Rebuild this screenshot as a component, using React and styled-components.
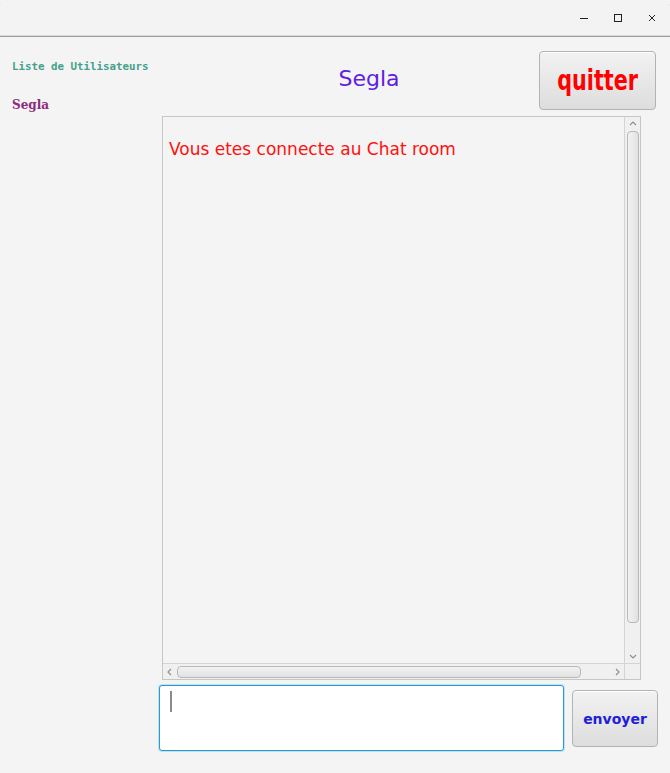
import React from 'react';
import styled, { createGlobalStyle } from 'styled-components';

const Global = createGlobalStyle`
    html, body {
        margin: 0;
        padding: 0;
        background: #f4f4f4;
    }
`;

const Window = styled.div`
    width: 670px;
    height: 773px;
    display: flex;
    flex-direction: column;
    background: #f4f4f4;
    font-family: "DejaVu Sans", sans-serif;
    overflow: hidden;
`;

const TitleBar = styled.div`
    height: 35px;
    display: flex;
    justify-content: flex-end;
    align-items: center;
    padding-right: 1px;
    background: #f3f3f3;
    border-top-left-radius: 6px;
    border-top-right-radius: 6px;
    border-bottom: 1px solid #dadada;
    box-shadow: 0 1px 0 #9c9c9c;
    margin-bottom: 1px;
`;

const WinButton = styled.div`
    width: 34px;
    height: 34px;
    display: flex;
    align-items: center;
    justify-content: center;
    color: #222;
`;

const Body = styled.div`
    flex: 1;
    display: grid;
    grid-template-columns: 159px 1fr;
`;

const Sidebar = styled.div`
    padding: 23px 0 0 12px;
    display: flex;
    flex-direction: column;
`;

const ListTitle = styled.div`
    font-family: "DejaVu Sans Mono", monospace;
    font-weight: bold;
    font-size: 10.8px;
    line-height: 14px;
    color: #46a08c;
    white-space: nowrap;
`;

const UserName = styled.div`
    margin-top: 24px;
    font-family: "DejaVu Serif", serif;
    font-weight: bold;
    font-size: 12px;
    line-height: 14px;
    color: #8c2c7c;
`;

const Main = styled.div`
    display: flex;
    flex-direction: column;
    padding-top: 14px;
`;

const Header = styled.div`
    height: 59px;
    display: flex;
    align-items: center;
    padding-right: 14px;
`;

const RoomTitle = styled.div`
    flex: 1;
    padding-left: 40px;
    text-align: center;
    font-size: 22px;
    color: #5e20e4;
    margin-top: -4px;
`;

const Button = styled.button`
    width: ${({ w }) => w}px;
    height: ${({ h }) => h}px;
    padding: 0;
    border: 1px solid #b3b3b3;
    border-radius: 4px;
    background: linear-gradient(#f2f2f2, #dddddd);
    box-shadow: inset 0 1px 0 #ffffff;
    color: ${({ color }) => color};
    font-weight: bold;
    display: flex;
    align-items: center;
    justify-content: center;
    cursor: pointer;
`;

const QuitLabel = styled.span`
    font-family: "DejaVu Sans", sans-serif;
    font-size: 28px;
    display: inline-block;
    transform: scaleX(0.74);
    margin-top: 0;
`;

const SendLabel = styled.span`
    font-family: "DejaVu Sans", sans-serif;
    font-size: 14px;
    margin-top: 2px;
`;

const ChatBox = styled.div`
    margin: 6px 29px 0 3px;
    height: 562px;
    border: 1px solid #c6c6c6;
    display: grid;
    grid-template-columns: 1fr 16px;
    grid-template-rows: 1fr 16px;
    background: #f4f4f4;
`;

const Messages = styled.div`
    padding: 21px 0 0 6px;
    font-size: 17px;
    line-height: 22px;
    color: #ff1010;
    white-space: nowrap;
    overflow: hidden;
`;

const VBar = styled.div`
    border-left: 1px solid #d4d4d4;
    background: #f0f0f0;
    display: flex;
    flex-direction: column;
    align-items: center;
`;

const HBar = styled.div`
    border-top: 1px solid #d4d4d4;
    background: #f0f0f0;
    display: flex;
    align-items: center;
`;

const Corner = styled.div`
    background: #f0f0f0;
    border-left: 1px solid #d4d4d4;
    border-top: 1px solid #d4d4d4;
`;

const Arrow = styled.div`
    width: 14px;
    height: 14px;
    flex: none;
    display: flex;
    align-items: center;
    justify-content: center;
`;

const VThumb = styled.div`
    width: 10px;
    height: 490px;
    border: 1px solid #b8b8b8;
    border-radius: 4px;
    background: linear-gradient(90deg, #f2f2f2, #e2e2e2);
`;

const HThumb = styled.div`
    width: 402px;
    height: 10px;
    border: 1px solid #b8b8b8;
    border-radius: 4px;
    background: linear-gradient(#f2f2f2, #e2e2e2);
`;

const Spacer = styled.div`
    flex: 1;
`;

const Footer = styled.div`
    margin: 5px 12px 0 0;
    display: flex;
    align-items: center;
    gap: 8px;
`;

const Input = styled.div`
    width: 405px;
    height: 66px;
    background: #ffffff;
    border: 1px solid #2a9bd0;
    border-radius: 3px;
    box-shadow: 0 0 0 1px #bfe2f3;
    padding: 5px 0 0 10px;
    box-sizing: border-box;
`;

const Caret = styled.div`
    width: 2px;
    height: 21px;
    background: #8a8a8a;
`;

const Chevron = ({ dir }) => {
    const paths = {
        up: 'M2 6 L5 3 L8 6',
        down: 'M2 4 L5 7 L8 4',
        left: 'M6 2 L3 5 L6 8',
        right: 'M4 2 L7 5 L4 8',
    };
    return (
        <svg width="10" height="10" viewBox="0 0 10 10">
            <path d={paths[dir]} fill="none" stroke="#8c8c8c" strokeWidth="1.1" />
        </svg>
    );
};

const App = () => (
    <Window>
        <Global />
        <TitleBar>
            <WinButton>
                <svg width="10" height="10" viewBox="0 0 10 10">
                    <path d="M1 5.5 H9" stroke="#222" strokeWidth="1" />
                </svg>
            </WinButton>
            <WinButton>
                <svg width="10" height="10" viewBox="0 0 10 10">
                    <rect x="1.5" y="1.5" width="7" height="7" fill="none" stroke="#222" strokeWidth="1" />
                </svg>
            </WinButton>
            <WinButton>
                <svg width="10" height="10" viewBox="0 0 10 10">
                    <path d="M2 2 L8 8 M8 2 L2 8" stroke="#222" strokeWidth="1" />
                </svg>
            </WinButton>
        </TitleBar>
        <Body>
            <Sidebar>
                <ListTitle>Liste de Utilisateurs</ListTitle>
                <UserName>Segla</UserName>
            </Sidebar>
            <Main>
                <Header>
                    <RoomTitle>Segla</RoomTitle>
                    <Button w={117} h={59} color="#ff0000">
                        <QuitLabel>quitter</QuitLabel>
                    </Button>
                </Header>
                <ChatBox>
                    <Messages>Vous etes connecte au Chat room</Messages>
                    <VBar>
                        <Arrow><Chevron dir="up" /></Arrow>
                        <VThumb />
                        <Spacer />
                        <Arrow><Chevron dir="down" /></Arrow>
                    </VBar>
                    <HBar>
                        <Arrow><Chevron dir="left" /></Arrow>
                        <HThumb />
                        <Spacer />
                        <Arrow><Chevron dir="right" /></Arrow>
                    </HBar>
                    <Corner />
                </ChatBox>
                <Footer>
                    <Input>
                        <Caret />
                    </Input>
                    <Button w={86} h={57} color="#2020d8">
                        <SendLabel>envoyer</SendLabel>
                    </Button>
                </Footer>
            </Main>
        </Body>
    </Window>
);

export default App;
